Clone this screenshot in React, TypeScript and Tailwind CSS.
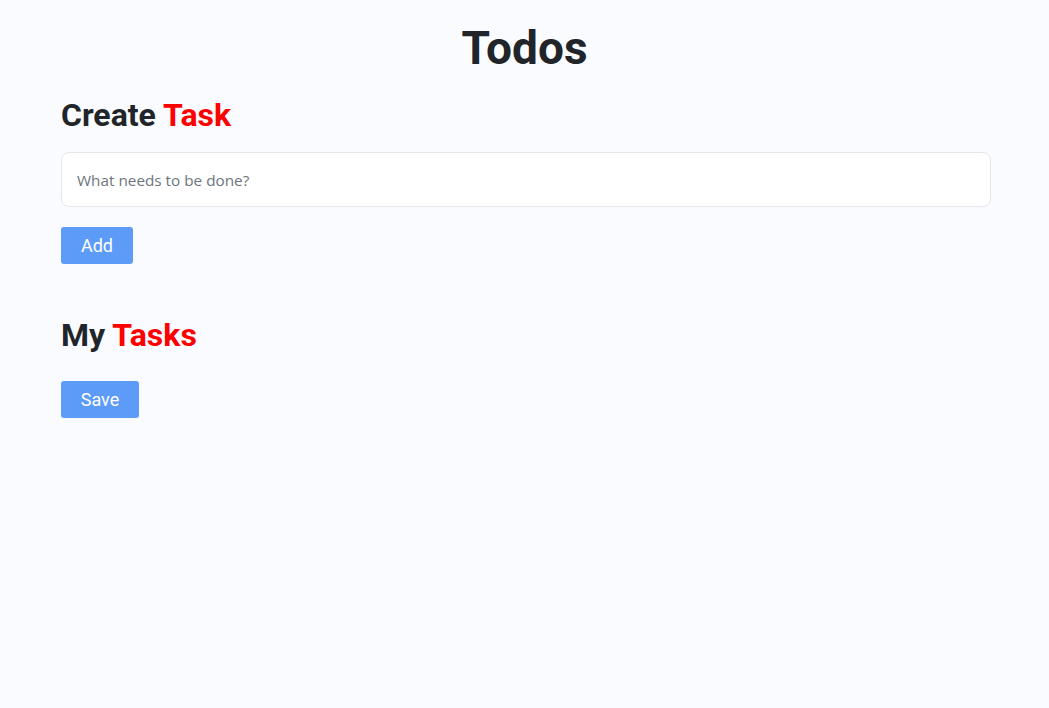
import React from 'react';

const App: React.FC = () => {
  return (
    <div className="min-h-screen bg-[#f9fbff] font-['Roboto',sans-serif] text-[#212529]">
      <div className="px-[61px] pb-10 pt-[20px]">
        <h1 className="text-center text-[46px] font-bold leading-[57px]">Todos</h1>

        <h2 className="mt-[19px] text-[32px] font-bold leading-[38px]">
          Create <span className="text-[#ff0000]">Task</span>
        </h2>

        <input
          type="text"
          placeholder="What needs to be done?"
          className="mt-[18px] block h-[55px] w-[930px] rounded-lg border border-[#e5e7eb] bg-white px-[15px] font-['Open_Sans',sans-serif] text-[15.3px] text-[#495057] placeholder:text-[#6c757d] focus:outline-none"
        />

        <button className="mt-5 h-[37px] w-[72px] rounded-[3px] bg-[#5c9bf8] text-[18px] text-white">
          Add
        </button>

        <h2 className="mt-[52px] text-[32px] font-bold leading-[38px]">
          My <span className="text-[#ff0000]">Tasks</span>
        </h2>

        <button className="mt-[27px] block h-[37px] w-[78px] rounded-[3px] bg-[#5c9bf8] text-[18px] text-white">
          Save
        </button>
      </div>
    </div>
  );
};

export default App;
